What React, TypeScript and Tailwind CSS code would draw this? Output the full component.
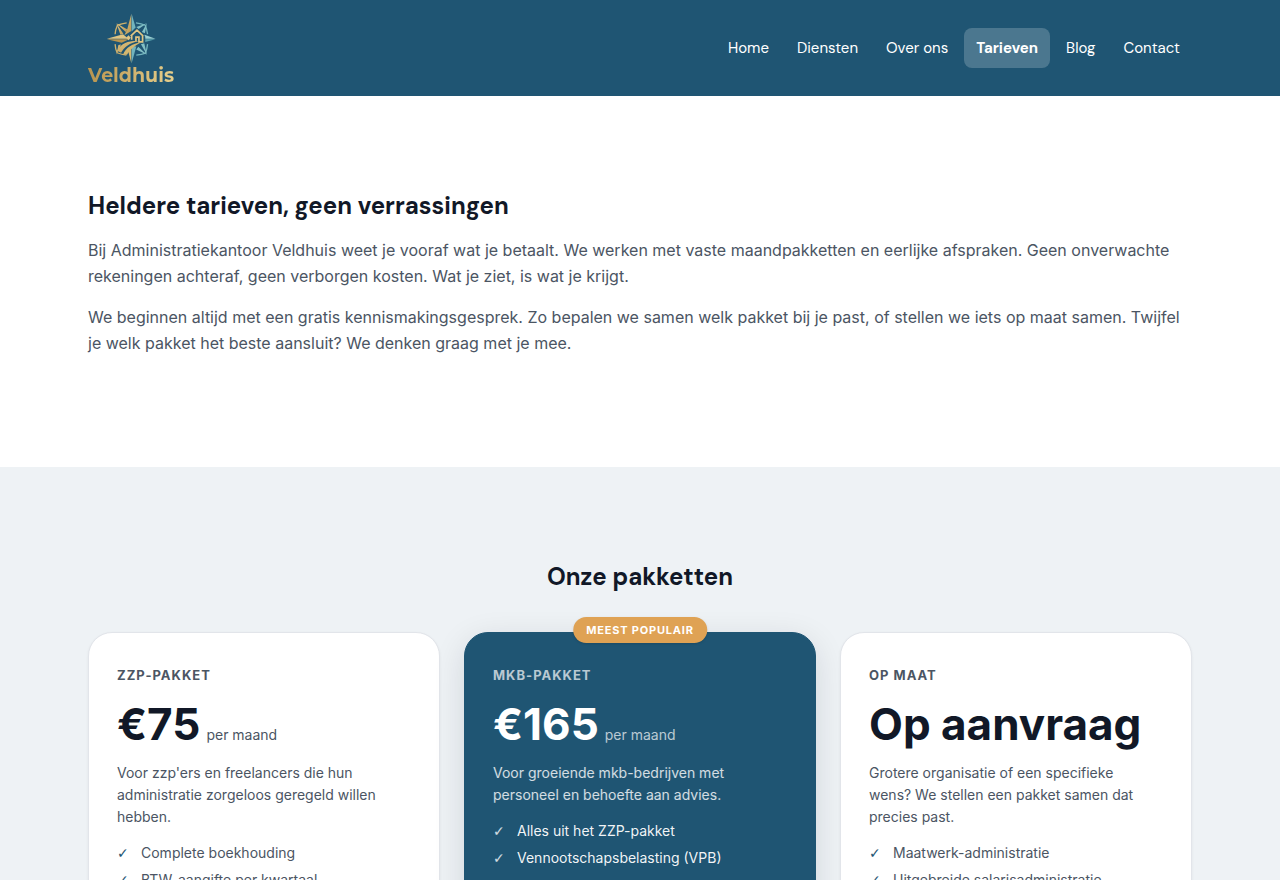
import clsx from "clsx";

const navItems = [
  { label: "Home", href: "/" },
  { label: "Diensten", href: "/diensten" },
  { label: "Over ons", href: "/over-ons" },
  { label: "Tarieven", href: "/tarieven", active: true },
  { label: "Blog", href: "/blog" },
  { label: "Contact", href: "/contact" },
];

const packages = [
  {
    name: "ZZP-pakket",
    price: "€75",
    period: "per maand",
    description:
      "Voor zzp'ers en freelancers die hun administratie zorgeloos geregeld willen hebben.",
    features: ["Complete boekhouding", "BTW-aangifte per kwartaal"],
  },
  {
    name: "MKB-pakket",
    price: "€165",
    period: "per maand",
    description:
      "Voor groeiende mkb-bedrijven met personeel en behoefte aan advies.",
    features: ["Alles uit het ZZP-pakket", "Vennootschapsbelasting (VPB)"],
    popular: true,
  },
  {
    name: "Op maat",
    price: "Op aanvraag",
    description:
      "Grotere organisatie of een specifieke wens? We stellen een pakket samen dat precies past.",
    features: ["Maatwerk-administratie", "Uitgebreide salarisadministratie"],
  },
];

function Compass() {
  return (
    <svg viewBox="15 12 150 154" className="h-[51px] w-[50px]" aria-hidden="true">
      <defs>
        <linearGradient id="gold" x1="0" y1="0" x2="1" y2="1">
          <stop offset="0" stopColor="#e0c583" />
          <stop offset="1" stopColor="#b9954f" />
        </linearGradient>
      </defs>
      {/* ring */}
      <path d="M77 42Q62 45 49 49Q43 62 42 76M42 106Q43 122 48 132Q62 138 76 139" fill="none" stroke="#cdb06b" strokeWidth="4" />
      <path d="M105 42Q122 44 133 49Q138 62 140 76M140 106Q138 122 134 133Q122 138 106 139" fill="none" stroke="#74b5bd" strokeWidth="4" />
      {/* diagonal points */}
      <path d="M46 43L79 62L74 69ZM46 43L67 75L58 78Z" fill="url(#gold)" />
      <path d="M138 43L106 54L113 60ZM138 43L123 69L132 73Z" fill="#82bfc5" />
      <path d="M138 138L106 122L112 114ZM138 138L120 106L130 103Z" fill="#82bfc5" />
      <path d="M46 138L52 109L60 107Z" fill="url(#gold)" />
      {/* main points */}
      <path d="M91 14L79 60L70 79L91 66Z" fill="url(#gold)" />
      <path d="M92 14L104 56L92 68Z" fill="#72b4bd" />
      <path d="M17 90L66 76L82 90Z" fill="#e0c583" />
      <path d="M17 91L62 102L84 91Z" fill="#b9954f" />
      <path d="M164 90L131 78L131 90Z" fill="#9bd0d2" />
      <path d="M164 91L119 103L131 91Z" fill="#5ca4b0" />
      <path d="M91 164L81 126L91 113Z" fill="#d4b76f" />
      <path d="M92 164L106 113L92 112Z" fill="#72b4bd" />
      {/* house */}
      <path d="M84 86L108 60L133 84V101L96 102Z" fill="#1f5573" />
      <path d="M89 82L108 64L127 82M92 80V93M125 80V99H114V85H105V98" fill="none" stroke="#e0c583" strokeWidth="5" />
      <path d="M75 87L83 79L89 87L83 94Z" fill="#e0c583" />
      {/* fields */}
      <path d="M48 126C62 102 84 96 112 97C86 102 70 114 60 132Z" fill="url(#gold)" />
      <path d="M66 137C75 115 94 104 122 100C100 111 86 122 78 138Z" fill="#d4b76f" />
    </svg>
  );
}

function Header() {
  return (
    <header className="bg-[#1f5573]">
      <div className="mx-auto flex h-24 max-w-[1200px] items-center justify-between px-12">
        <a href="/" className="flex flex-col items-center pt-1" aria-label="Veldhuis home">
          <Compass />
          <span className="bg-linear-to-r from-[#b9954f] to-[#e6cf8c] bg-clip-text font-[Montserrat,sans-serif] text-[19px] leading-6 font-bold text-transparent">
            Veldhuis
          </span>
        </a>
        <nav className="flex gap-1 font-['DM_Sans',Inter,sans-serif]">
          {navItems.map((item) => (
            <a
              key={item.label}
              href={item.href}
              aria-current={item.active ? "page" : undefined}
              className={clsx(
                "rounded-lg px-3 text-[15px] leading-10 text-white",
                item.active ? "bg-white/20 font-bold" : "font-normal hover:bg-white/10"
              )}
            >
              {item.label}
            </a>
          ))}
        </nav>
      </div>
    </header>
  );
}

function PackageCard({ pkg }: { pkg: (typeof packages)[number] }) {
  const popular = pkg.popular;
  return (
    <article
      className={clsx(
        "relative rounded-3xl border px-7 pt-8 pb-8",
        popular
          ? "border-[#1f5573] bg-[#1f5573] text-white shadow-[0_8px_32px_rgba(15,23,42,0.12)]"
          : "border-[#e2e5ea] bg-white text-[#4b5563] shadow-[0_1px_3px_rgba(15,23,42,0.06)]"
      )}
    >
      {popular && (
        <span className="absolute -top-4 left-1/2 -translate-x-1/2 rounded-full bg-[#dfa254] px-[13px] text-[11px] leading-[26px] font-bold tracking-[0.8px] whitespace-nowrap text-white uppercase shadow-sm">
          Meest populair
        </span>
      )}
      <h3
        className={clsx(
          "mb-4 text-[13px] leading-5 font-bold tracking-[1px] uppercase",
          popular && "text-white/70"
        )}
      >
        {pkg.name}
      </h3>
      <p className="mb-[14px] flex items-baseline gap-1.5">
        <span
          className={clsx(
            "text-[44px] leading-[47px] font-bold",
            popular ? "text-white" : "text-[#111827]"
          )}
        >
          {pkg.price}
        </span>
        {pkg.period && (
          <span className={clsx("text-[14px]", popular && "text-white/70")}>{pkg.period}</span>
        )}
      </p>
      <p className={clsx("mb-[14px] pr-2 text-[14px] leading-[22px]", popular && "text-white/80")}>
        {pkg.description}
      </p>
      <ul className="flex flex-col gap-[5px] text-[14px] leading-[22px]">
        {pkg.features.map((feature) => (
          <li key={feature} className={clsx("flex", popular && "text-white/95")}>
            <span
              className={clsx(
                "w-6 font-['DejaVu_Sans',sans-serif]",
                popular ? "text-white/80" : "text-[#1f5573]"
              )}
            >
              ✓
            </span>
            {feature}
          </li>
        ))}
      </ul>
    </article>
  );
}

export default function App() {
  return (
    <div className="bg-white font-[Inter,sans-serif] text-[#4b5563]">
      <Header />
      <main>
        {/* Intro */}
        <section className="py-24">
          <div className="mx-auto max-w-[1200px] px-12">
            <h1 className="mb-[18px] font-['DM_Sans',Inter,sans-serif] text-[24px] leading-[27px] font-bold text-[#111827]">
              Heldere tarieven, geen verrassingen
            </h1>
            <p className="mb-[15px] text-[16px] leading-[26px]">
              Bij Administratiekantoor Veldhuis weet je vooraf wat je betaalt. We werken met vaste
              maandpakketten en eerlijke afspraken. Geen onverwachte rekeningen achteraf, geen
              verborgen kosten. Wat je ziet, is wat je krijgt.
            </p>
            <p className="mb-[15px] text-[16px] leading-[26px]">
              We beginnen altijd met een gratis kennismakingsgesprek. Zo bepalen we samen welk
              pakket bij je past, of stellen we iets op maat samen. Twijfel je welk pakket het beste
              aansluit? We denken graag met je mee.
            </p>
          </div>
        </section>

        {/* Packages */}
        <section className="bg-[#eef2f5] py-24">
          <div className="mx-auto max-w-[1200px] px-12">
            <h2 className="mb-[42px] text-center font-['DM_Sans',Inter,sans-serif] text-[24px] leading-[27px] font-bold text-[#111827]">
              Onze pakketten
            </h2>
            <div className="grid grid-cols-1 gap-6 md:grid-cols-3">
              {packages.map((pkg) => (
                <PackageCard key={pkg.name} pkg={pkg} />
              ))}
            </div>
          </div>
        </section>
      </main>
    </div>
  );
}
